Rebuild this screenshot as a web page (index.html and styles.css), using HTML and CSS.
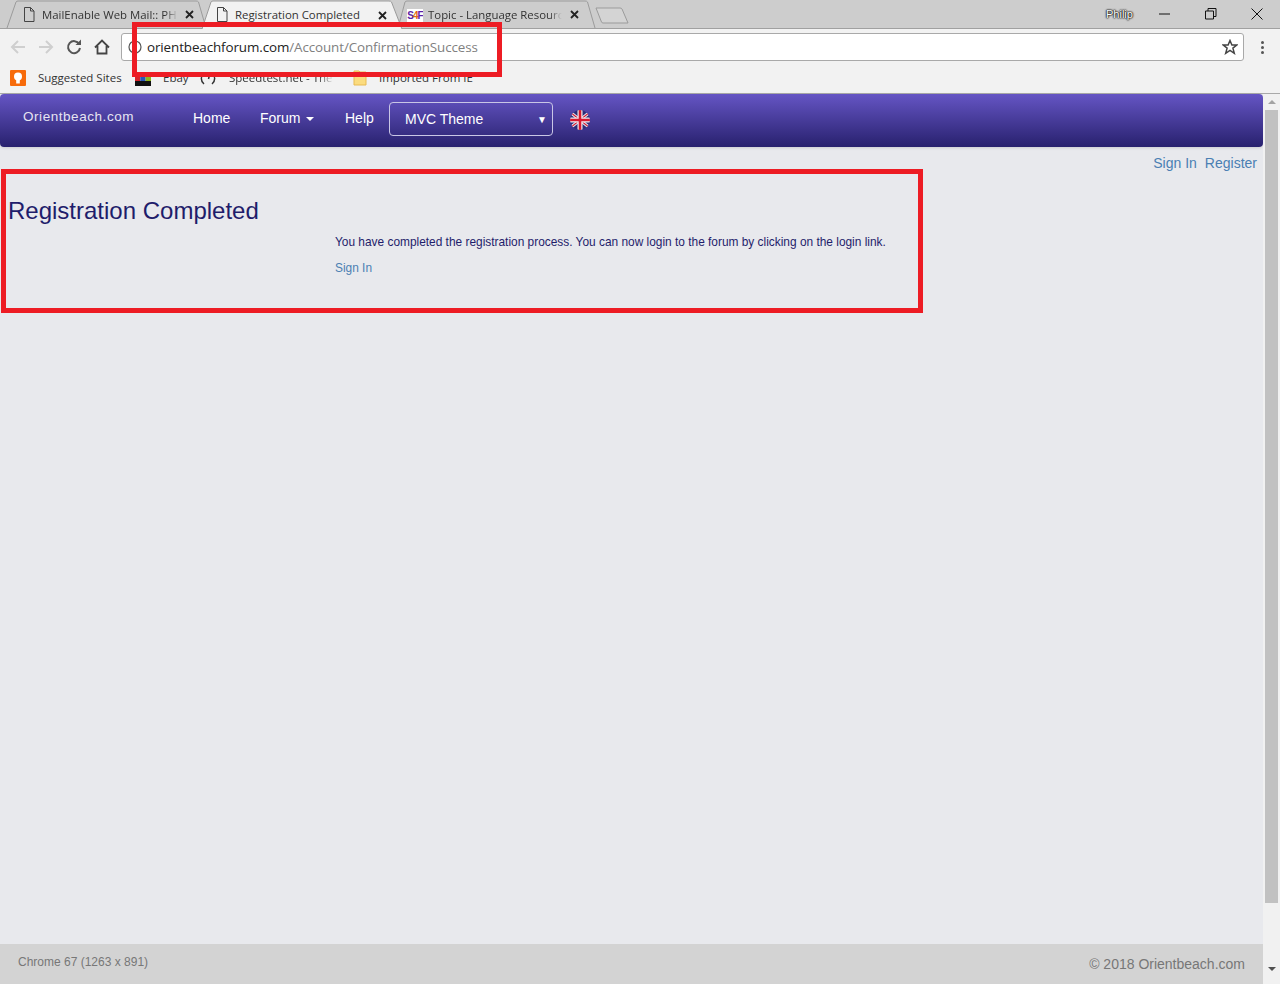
FILE: index.html
```html
<!DOCTYPE html>
<html lang="en">
<head>
<meta charset="utf-8">
<title>Registration Completed</title>
<link rel="stylesheet" href="styles.css">
</head>
<body>
<div class="browser">
  <div class="tabstrip">
    <div class="tab tab-first">
      <svg class="tab-shape" viewBox="0 0 200 28" preserveAspectRatio="none"><path d="M1 28 L10 2 Q10.500 1 12 1 L190 1 Q192 1 192.500 2 L200 28" fill="#cdcdcd" stroke="#9b9b9b"/></svg>
      <svg class="fav" viewBox="0 0 12 15"><path d="M1.500 .5H7.500L11 4V14.500H1.500Z M7.500 .5V4H11" fill="none" stroke="#444"/></svg>
      <span class="tab-title tab-title-fade">MailEnable Web Mail:: PH</span>
      <svg class="tab-x" viewBox="0 0 9 9"><path d="M1 1L8 8M8 1L1 8" stroke="#222" stroke-width="1.800"/></svg>
    </div>
    <div class="tab tab-active">
      <svg class="tab-shape" viewBox="0 0 200 29" preserveAspectRatio="none"><path d="M0 29 L9 2 Q9.500 1 11 1 L187 1 Q189 1 189.500 2 L200 29" fill="#f2f2f2" stroke="#9b9b9b"/></svg>
      <svg class="fav" viewBox="0 0 12 15"><path d="M1.500 .5H7.500L11 4V14.500H1.500Z M7.500 .5V4H11" fill="none" stroke="#444"/></svg>
      <span class="tab-title">Registration Completed</span>
      <svg class="tab-x" viewBox="0 0 9 9"><path d="M1 1L8 8M8 1L1 8" stroke="#222" stroke-width="1.800"/></svg>
    </div>
    <div class="tab tab-last">
      <svg class="tab-shape" viewBox="0 0 197 28" preserveAspectRatio="none"><path d="M0 28 L7 2 Q7.500 1 9 1 L187 1 Q189 1 189.500 2 L197 28" fill="#cdcdcd" stroke="#9b9b9b"/></svg>
      <span class="sf-icon">S<b>4</b>F</span>
      <span class="tab-title tab-title-fade">Topic - Language Resourc</span>
      <svg class="tab-x" viewBox="0 0 9 9"><path d="M1 1L8 8M8 1L1 8" stroke="#222" stroke-width="1.800"/></svg>
    </div>
    <svg class="newtab" viewBox="0 0 34 17"><path d="M1 1H25Q26.500 1 27 2L33 16H8Q7 16 6.500 15Z" fill="#d4d4d4" stroke="#9b9b9b"/></svg>
    <div class="window-controls">
      <span class="profile">Philip</span>
      <svg class="wc wc-min" viewBox="0 0 12 12"><path d="M0 6H11" stroke="#111" stroke-width="1"/></svg>
      <svg class="wc wc-max" viewBox="0 0 12 12"><path d="M.5 3H8.500V11H.5Z M3 3V.5H11V8.500H8.500" fill="none" stroke="#111"/></svg>
      <svg class="wc wc-close" viewBox="0 0 12 12"><path d="M.5 .5L11.500 11.500M11.500 .5L.5 11.500" stroke="#111"/></svg>
    </div>
  </div>

  <div class="toolbar">
    <svg class="tool" viewBox="0 0 16 16"><path d="M15 8H2M8 2L2 8L8 14" fill="none" stroke="#cfcfcf" stroke-width="2"/></svg>
    <svg class="tool" viewBox="0 0 16 16"><path d="M1 8H14M8 2L14 8L8 14" fill="none" stroke="#cfcfcf" stroke-width="2"/></svg>
    <svg class="tool" viewBox="0 0 16 16"><path d="M13.200 5A6 6 0 1 0 14 9" fill="none" stroke="#555" stroke-width="2"/><path d="M9.500 6H15V.5Z" fill="#555"/></svg>
    <svg class="tool" viewBox="0 0 16 16"><path d="M1 8.500L8 1.500L15 8.500M3.500 7V14.500H12.500V7" fill="none" stroke="#444" stroke-width="1.800"/></svg>
    <div class="omnibox">
      <svg class="info" viewBox="0 0 14 14"><circle cx="7" cy="7" r="6" fill="none" stroke="#555" stroke-width="1.200"/><path d="M7 3.500V10.500" stroke="#555" stroke-width="1.200"/></svg>
      <span class="url">orientbeachforum.com<span class="url-path">/Account/ConfirmationSuccess</span></span>
      <svg class="star" viewBox="0 0 16 16"><path d="M8 1.500L9.900 6H14.800L10.900 9.100L12.300 14.300L8 11.400L3.700 14.300L5.100 9.100L1.200 6H6.100Z" fill="none" stroke="#444" stroke-width="1.500"/></svg>
    </div>
    <div class="menu-dots"><i></i><i></i><i></i></div>
  </div>

  <div class="bookmarks">
    <span class="bm bm-suggested">
      <svg class="bm-icon" viewBox="0 0 16 16"><rect width="16" height="16" rx="1" fill="#f76b0b"/><circle cx="8" cy="6.500" r="4" fill="#fff"/><rect x="6.200" y="10" width="3.600" height="3.500" fill="#fff"/></svg>
      Suggested Sites
    </span>
    <span class="bm bm-ebay">
      <svg class="bm-icon" viewBox="0 0 16 16"><rect y="3" width="5.300" height="8" fill="#d8232a"/><rect x="5.300" y="3" width="5.300" height="8" fill="#2857b8"/><rect x="10.600" y="3" width="5.400" height="8" fill="#8eb51d"/><rect y="11" width="16" height="5" fill="#111"/></svg>
      Ebay
    </span>
    <span class="bm bm-speed">
      <svg class="bm-icon bm-icon-speed" viewBox="0 0 16 16"><path d="M4 14A7 7 0 0 1 4 3M12 3A7 7 0 0 1 12 14" fill="none" stroke="#333" stroke-width="1.500"/><path d="M6 6L9.500 5L8.500 9" fill="none" stroke="#333" stroke-width="1.500"/></svg>
      <span class="bm-fade">Speedtest.net - The</span>
    </span>
    <span class="bm bm-ie">
      <svg class="bm-icon bm-icon-ie" viewBox="0 0 16 16"><path d="M2 1H7L8 2H14V15H2Z" fill="#fbdc7f" stroke="#e8bb53"/></svg>
      Imported From IE
    </span>
  </div>

  <div class="viewport">
    <div class="page">
      <nav class="navbar">
        <a class="brand">Orientbeach.com</a>
        <a class="nav-link nav-home">Home</a>
        <a class="nav-link nav-forum">Forum <i class="caret"></i></a>
        <a class="nav-link nav-help">Help</a>
        <div class="theme-select"><span>MVC Theme</span><i class="select-arrow">▼</i></div>
        <svg class="flag" viewBox="0 0 20 20">
          <defs><clipPath id="flagclip"><circle cx="10" cy="10" r="10"/></clipPath></defs>
          <g clip-path="url(#flagclip)">
            <rect width="20" height="20" fill="#2c2f78"/>
            <path d="M0 2L20 18M20 2L0 18" stroke="#e9e9ee" stroke-width="3"/>
            <path d="M0 2L20 18M20 2L0 18" stroke="#d2213a" stroke-width="1.200"/>
            <path d="M10 0V20M0 10H20" stroke="#eeeef2" stroke-width="5"/>
            <path d="M10 0V20M0 10H20" stroke="#d8182f" stroke-width="2.600"/>
          </g>
        </svg>
      </nav>
      <div class="auth-links"><a>Sign In</a><a>Register</a></div>
      <main class="content">
        <h2 class="heading">Registration Completed</h2>
        <div class="message">
          <p>You have completed the registration process. You can now login to the forum by clicking on the login link.</p>
          <p><a>Sign In</a></p>
        </div>
      </main>
      <footer class="footer">
        <span class="footer-info">Chrome 67 (1263 x 891)</span>
        <span class="footer-copy">© 2018 Orientbeach.com</span>
      </footer>
    </div>
    <div class="scrollbar">
      <i class="sb-up"></i>
      <div class="sb-thumb"></div>
      <i class="sb-down"></i>
    </div>
  </div>

  <div class="annot annot-url"></div>
  <div class="annot annot-main"></div>
</div>
</body>
</html>
```
FILE: styles.css
```css
* { box-sizing: border-box; }
html, body { margin: 0; padding: 0; }
body { width: 1280px; height: 984px; overflow: hidden; font-family: "Liberation Sans", Arial, sans-serif; }
.browser { position: relative; width: 1280px; height: 984px; display: flex; flex-direction: column; background: #f2f2f2; }

.tabstrip { position: relative; height: 29px; flex: none; display: flex; align-items: flex-start; padding-left: 6px; background: #cdcdcd; border-bottom: 1px solid #a0a0a0; }
.tab { position: relative; height: 28px; display: flex; align-items: center; font-family: "Open Sans", "Noto Sans", sans-serif; font-size: 11.400px; color: #333; }
.tab-shape { position: absolute; left: 0; top: 0; width: 100%; height: 100%; overflow: visible; }
.tab > :not(.tab-shape) { position: relative; }
.tab-first { width: 200px; padding-left: 17px; }
.tab-active { width: 200px; margin-left: -4px; padding-left: 14px; z-index: 2; height: 29px; }
.tab-active .tab-title { margin-top: 0; }
.tab-last { width: 197px; margin-left: -4px; padding-left: 9px; z-index: 1; }
.fav { width: 12px; height: 15px; flex: none; margin-right: 7px; }
.tab-title { width: 140px; margin-top: 2px; white-space: nowrap; overflow: hidden; line-height: 16px; }
.tab-title-fade { -webkit-mask-image: linear-gradient(to right, #000 88%, transparent 97%); mask-image: linear-gradient(to right, #000 88%, transparent 97%); }
.tab-last .tab-title { width: 138px; }
.tab-x { width: 9px; height: 9px; flex: none; margin-left: 3px; margin-top: 1px; }
.tab-last .tab-x { margin-left: 4px; }
.sf-icon { width: 16px; height: 14px; margin: 3px 5px 0 0; background: #fff; color: #5b1fa8; font: bold 10px/14px "Liberation Sans", sans-serif; text-align: center; white-space: nowrap; overflow: hidden; flex: none; letter-spacing: -1px; }
.sf-icon b { color: #e06a10; }
.newtab { width: 34px; height: 17px; margin: 7px 0 0 0; flex: none; }
.window-controls { margin-left: auto; display: flex; align-items: center; height: 28px; }
.profile { font-size: 11px; width: 30px; margin-right: 23px; color: #fff; text-shadow: 0 0 1px #000, 0 0 2px #000, 0 0 2px #000; }
.wc { width: 12px; height: 12px; flex: none; }
.wc-min { margin-right: 34px; }
.wc-max { margin-right: 34px; }
.wc-close { margin-right: 17px; }

.toolbar { height: 36px; flex: none; display: flex; align-items: center; padding-left: 10px; background: #f2f2f2; }
.tool { width: 16px; height: 16px; margin-right: 12px; flex: none; }
.omnibox { width: 1123px; height: 28px; margin-left: -1px; display: flex; align-items: center; background: #fff; border: 1px solid #a9a9a9; border-radius: 3px; padding: 0 5px 0 6px; }
.info { width: 14px; height: 14px; flex: none; margin-right: 5px; }
.url { font-family: "Open Sans", "Noto Sans", sans-serif; font-size: 13.400px; color: #222; white-space: nowrap; letter-spacing: -.1px; }
.url-path { color: #808080; }
.star { width: 16px; height: 16px; margin-left: auto; flex: none; }
.menu-dots { display: flex; flex-direction: column; gap: 2px; margin-left: 17px; }
.menu-dots i { width: 3px; height: 3px; border-radius: 50%; background: #555; }

.bookmarks { height: 28px; flex: none; display: flex; align-items: center; padding: 0 0 3px 10px; font-family: "Open Sans", "Noto Sans", sans-serif; font-size: 11.500px; color: #333; background: #f2f2f2; }
.bm { display: flex; align-items: center; white-space: nowrap; }
.bm-icon { width: 16px; height: 16px; flex: none; margin-right: 12px; }
.bm-icon-speed { margin-right: 13px; }
.bm-icon-ie { margin-right: 11px; }
.bm-suggested { width: 125px; }
.bm-ebay { width: 65px; }
.bm-speed { width: 152px; }
.bm-fade { width: 105px; overflow: hidden; -webkit-mask-image: linear-gradient(to right, #000 85%, transparent 100%); mask-image: linear-gradient(to right, #000 85%, transparent 100%); }

.viewport { flex: 1; display: flex; min-height: 0; border-top: 1px solid #a9a9a9; }
.page { width: 1263px; flex: none; display: flex; flex-direction: column; background: #e8e9ed; }
.navbar { height: 53px; flex: none; display: flex; align-items: center; background: linear-gradient(#6555c4, #28216e); border-radius: 4px; color: #fff; box-shadow: 0 1px 3px rgba(0,0,0,.12); }
.brand { width: 193px; padding-left: 23px; margin-top: -9px; font-size: 13.500px; letter-spacing: .55px; color: #e6e4f2; }
.nav-link { font-size: 14px; color: #fff; margin-top: -6px; }
.nav-home { width: 67px; }
.nav-forum { width: 85px; }
.nav-help { width: 44px; }
.caret { display: inline-block; width: 0; height: 0; margin-left: 2px; vertical-align: middle; border-top: 4px solid #fff; border-left: 4px solid transparent; border-right: 4px solid transparent; }
.theme-select { width: 164px; height: 34px; margin-top: -3px; display: flex; align-items: center; justify-content: space-between; padding: 0 5px 0 15px; border: 1px solid #c9c6e6; border-radius: 4px; font-size: 14px; color: #fff; }
.select-arrow { font-style: normal; font-size: 10px; }
.flag { width: 20px; height: 20px; margin: -2px 0 0 17px; flex: none; }

.auth-links { height: 31px; margin-bottom: 2px; flex: none; display: flex; justify-content: flex-end; align-items: center; gap: 8px; padding-right: 6px; font-size: 14px; color: #4a7fb3; }
.content { flex: 1; padding-left: 8px; }
.heading { margin: 17px 0 0; font-size: 24px; line-height: 28px; font-weight: 400; color: #1f1d6b; }
.message { margin: 10px 0 0 327px; font-size: 11.900px; line-height: 14px; color: #1f1d6b; }
.message p { margin: 0 0 12px; }
.message a { color: #4a7fb3; }
.footer { height: 40px; flex: none; display: flex; justify-content: space-between; padding: 11px 18px 0; background: #d3d3d3; color: #777; font-size: 12px; }
.footer-copy { font-size: 14px; padding-top: 1px; }

.scrollbar { flex: 1; position: relative; display: flex; flex-direction: column; align-items: center; background: #f1f1f1; }
.sb-up, .sb-down { flex: none; width: 0; height: 0; border-left: 4px solid transparent; border-right: 4px solid transparent; }
.sb-up { border-bottom: 4px solid #a3a3a3; margin: 6px 0 6px; }
.sb-down { border-top: 4px solid #505050; margin: 0 0 5px; }
.sb-thumb { width: 13px; height: 793px; background: #c1c1c1; margin-bottom: 64px; }

.annot { position: absolute; border: 5px solid #ed1c24; pointer-events: none; z-index: 5; }
.annot-url { left: 132px; top: 22px; width: 370px; height: 55px; }
.annot-main { left: 1px; top: 169px; width: 922px; height: 144px; }
```
